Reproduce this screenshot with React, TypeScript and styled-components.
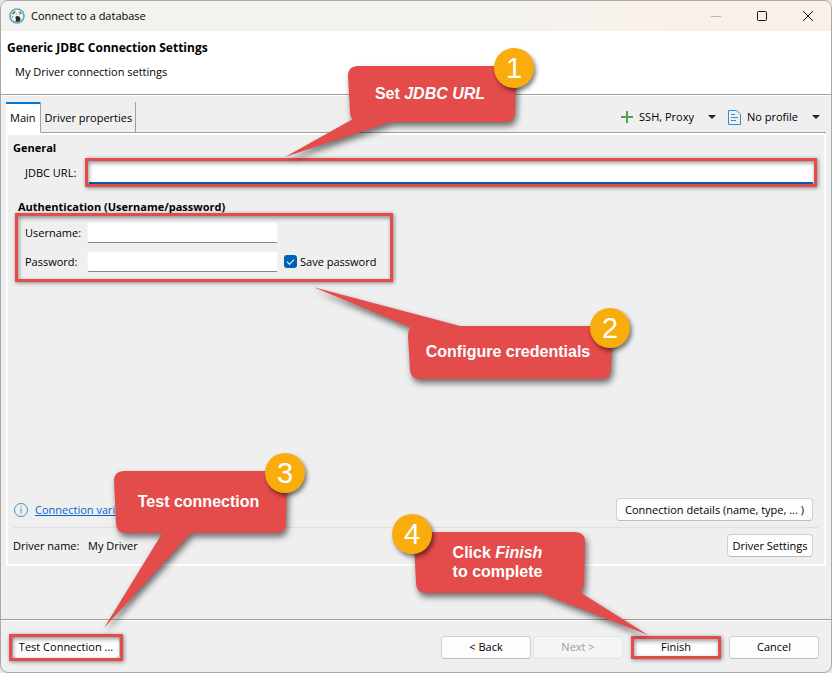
import React, { ReactNode } from "react";
import styled, { createGlobalStyle, css } from "styled-components";

const RED = "#e44b4b";
const LINE = "#a0a0a0";
const PANEL = "#efefef";

const GlobalStyle = createGlobalStyle`
  *, *::before, *::after { box-sizing: border-box; }
  body {
    margin: 0;
    background: #e4e4e6;
    color: #000;
    font: 11px/16px "Open Sans", "Noto Sans", sans-serif;
    white-space: nowrap;
  }
  button, input { font: inherit; color: inherit; }
`;

const Dialog = styled.main`
  position: relative;
  display: flex;
  flex-direction: column;
  min-height: 100vh;
  overflow: hidden;
  background: ${PANEL};
  border: 1px solid #a9a9ab;
  border-radius: 8px;
`;

const TitleBar = styled.header`
  display: flex;
  align-items: center;
  height: 30px;
  padding-left: 8px;
  gap: 6px;
  background: linear-gradient(90deg, #f3f2ef 60%, #f9f1e9 80%);
`;

const WindowButtons = styled.div`
  display: flex;
  margin-left: auto;
`;

const WindowButton = styled.button`
  display: grid;
  place-items: center;
  width: 46px;
  height: 30px;
  padding: 0;
  border: 0;
  background: none;
  color: #111;
  &:disabled { color: #bdb9b3; }
`;

const Intro = styled.section`
  display: flex;
  flex-direction: column;
  gap: 8px;
  height: 64px;
  padding: 9px 6px;
  background: #fff;
  border-bottom: 1px solid ${LINE};
`;

const IntroTitle = styled.h1`
  margin: 0;
  font-size: 12px;
  line-height: 16px;
  font-weight: 700;
`;

const IntroText = styled.p`
  margin: 0;
  padding-left: 8px;
`;

const Body = styled.div`
  display: flex;
  flex: 1;
  flex-direction: column;
  padding: 6px 5px 53px;
  border-top: 1px solid #fff;
`;

const TabBar = styled.div`
  display: flex;
  height: 31px;
`;

const Tab = styled.button<{ $active?: boolean }>`
  padding: 2px 3px 0 4px;
  border: 0;
  border-right: 1px solid ${LINE};
  border-bottom: 1px solid ${LINE};
  background: none;
  ${(p) =>
    p.$active &&
    css`
      padding: 2px 4px 0;
      border-bottom-color: #fff;
      background: linear-gradient(#0078d7 2px, #fff 2px);
    `}
`;

const Tools = styled.div`
  display: flex;
  flex: 1;
  align-items: center;
  justify-content: flex-end;
  gap: 12px;
  padding-right: 6px;
  border-bottom: 1px solid ${LINE};
`;

const Tool = styled.button`
  display: flex;
  align-items: center;
  gap: 6px;
  padding: 0;
  border: 0;
  background: none;
`;

const Caret = styled.span`
  margin-left: 8px;
  border: 4px solid transparent;
  border-top-color: #222;
  border-bottom: 0;
`;

const Panel = styled.form`
  display: flex;
  flex: 1;
  flex-direction: column;
  padding: 7px 5px 6px;
  border: 2px solid #fff;
`;

const Heading = styled.h2<{ $indent?: boolean }>`
  margin: 0 0 ${(p) => (p.$indent ? 0 : 4)}px;
  padding-left: ${(p) => (p.$indent ? 5 : 0)}px;
  font-size: 11px;
  line-height: 12px;
  font-weight: 700;
`;

const Highlight = styled.div`
  position: relative;
  display: flex;
  &::after {
    content: "";
    position: absolute;
    inset: 0;
    border: 3px solid ${RED};
    box-shadow: 1px 1px 4px rgba(0, 0, 0, 0.45), inset 1px 2px 4px rgba(0, 0, 0, 0.4);
    pointer-events: none;
  }
`;

const UrlRow = styled.div`
  display: grid;
  grid-template-columns: 60px 1fr;
  align-items: center;
  margin: 0 2px 14px 12px;
`;

const TextBox = styled.input<{ $focus?: boolean }>`
  width: 100%;
  min-width: 0;
  height: ${(p) => (p.$focus ? 23 : 21)}px;
  padding: 0 4px;
  border: 1px solid #f5f5f5;
  border-bottom: ${(p) => (p.$focus ? "2px solid #005fb8" : "1px solid #868686")};
  border-radius: 2px;
  background: #fff;
  outline: none;
`;

const UrlHighlight = styled(Highlight)`
  padding: 3px;
`;

const Credentials = styled(Highlight)`
  display: grid;
  grid-template-columns: 62px 191px 1fr;
  align-items: center;
  gap: 8px 0;
  max-width: 378px;
  margin-left: 2px;
  padding: 9px 10px 10px;
`;

const SaveLabel = styled.label`
  grid-column: 3;
  display: flex;
  align-items: center;
  gap: 3px;
  padding-left: 6px;
`;

const CheckBox = styled.input`
  appearance: none;
  width: 13px;
  height: 13px;
  margin: 0;
  border-radius: 3px;
  background: #005fb8;
  display: grid;
  place-items: center;
  &:checked::before {
    content: "";
    width: 7px;
    height: 4px;
    border: solid #fff;
    border-width: 0 0 1px 1px;
    transform: translateY(-1px) rotate(-45deg);
  }
`;

const Details = styled.div`
  display: flex;
  align-items: center;
  justify-content: space-between;
  margin-top: auto;
  padding: 0 6px 6px 0;
`;

const DriverRow = styled.div`
  display: flex;
  align-items: center;
  justify-content: space-between;
  padding: 6px 6px 1px 0;
  border-top: 1px solid #dfdfdf;
`;

const InfoLine = styled.div`
  display: flex;
  align-items: center;
  gap: 6px;
`;

const Link = styled.a`
  color: #0066cc;
  text-decoration: underline;
`;

const Driver = styled.dl`
  display: grid;
  grid-template-columns: 75px auto;
  margin: 0;
  dd { margin: 0; }
`;

const Button = styled.button<{ $width?: number }>`
  min-width: ${(p) => p.$width ?? 90}px;
  height: 23px;
  padding: 0 4px;
  border: 1px solid #d0d0d0;
  border-bottom-color: #bcbcbc;
  border-radius: 4px;
  background: #fdfdfd;
  &:disabled {
    color: #9d9d9d;
    border-color: #e3e3e3;
    background: #f5f5f5;
  }
`;

const Footer = styled.footer`
  position: relative;
  display: flex;
  align-items: center;
  justify-content: space-between;
  height: 53px;
  padding: 2px 12px 0 8px;
  border-top: 1px solid ${LINE};
  box-shadow: inset 0 1px #fff;
`;

const TestHighlight = styled(Highlight)`
  padding: 2px 3px;
`;

const Actions = styled.div`
  display: flex;
  gap: 8px;
`;

const Pager = styled.div`
  display: flex;
  gap: 2px;
`;

const Bubble = styled.aside<{ $x: number; $y: number; $w: number; $h: number; $fromRight?: boolean; $fromBottom?: boolean }>`
  position: absolute;
  z-index: 2;
  ${(p) => (p.$fromRight ? "right" : "left")}: ${(p) => p.$x}px;
  ${(p) => (p.$fromBottom ? "bottom" : "top")}: ${(p) => p.$y}px;
  display: grid;
  place-items: center;
  width: ${(p) => p.$w}px;
  height: ${(p) => p.$h}px;
  padding: 0 4px 2px 0;
  color: #fff;
  font: 700 16px/19px "Liberation Sans", Arial, sans-serif;
  text-align: center;
  pointer-events: none;
`;

const BubbleShape = styled.svg`
  position: absolute;
  inset: 0;
  overflow: visible;
  filter: drop-shadow(2px 4px 3px rgba(0, 0, 0, 0.55));
`;

const BubbleText = styled.div`
  position: relative;
`;

const Badge = styled.span<{ $left?: boolean }>`
  position: absolute;
  top: -18px;
  ${(p) => (p.$left ? "left: -22px" : "right: -18px")};
  width: 40px;
  height: 40px;
  border-radius: 50%;
  background: #f9ad0c;
  box-shadow: 2px 3px 4px rgba(0, 0, 0, 0.5);
  font-weight: 400;
  font-size: 29px;
  line-height: 41px;
`;

interface CalloutProps {
  x: number;
  y: number;
  w: number;
  h: number;
  step: number;
  tail: string;
  fromRight?: boolean;
  fromBottom?: boolean;
  badgeLeft?: boolean;
  children: ReactNode;
}

function Callout({ x, y, w, h, step, tail, fromRight, fromBottom, badgeLeft, children }: CalloutProps) {
  const body = `M10 0H${w - 10}Q${w} 0 ${w} 10L${w - 1} ${h - 10}Q${w - 1} ${h} ${w - 11} ${h}H12Q2 ${h} 2 ${h - 10}L0 10Q0 0 10 0Z`;
  return (
    <Bubble $x={x} $y={y} $w={w} $h={h} $fromRight={fromRight} $fromBottom={fromBottom}>
      <BubbleShape width={w} height={h} fill={RED} aria-hidden="true">
        <path d={body} />
        <path d={tail} />
      </BubbleShape>
      <BubbleText>{children}</BubbleText>
      <Badge $left={badgeLeft}>{step}</Badge>
    </Bubble>
  );
}

const AppLogo = () => (
  <svg width="16" height="16" viewBox="0 0 16 16" aria-hidden="true">
    <circle cx="8" cy="8" r="7" fill="#f7f7f5" stroke="#4fb3bd" strokeWidth="1.7" />
    <path d="M3 5.8 5 3.6 7 3.2 5.6 5.1 4.2 6.6zM9.4 3.3l2.4 1 1 2.2-1.5-.7z" fill="#575250" />
    <path d="M6.2 9.1 8.3 7.8l2.5 1.3.9 2.2-1 2L8.3 14l-2-.8.7-2z" fill="#302b29" />
    <path d="M3.2 7.8 4 10M10 5.8l.8 1M7.1 5.4v1.2" stroke="#777" strokeWidth=".9" fill="none" />
  </svg>
);

const PlusIcon = () => (
  <svg width="12" height="12" viewBox="0 0 12 12" aria-hidden="true">
    <path d="M6 0v12M0 6h12" stroke="#4ba446" strokeWidth="2" />
  </svg>
);

const ProfileIcon = () => (
  <svg width="13" height="15" viewBox="0 0 13 15" fill="none" stroke="#2f8fd3" aria-hidden="true">
    <path d="M.5.5h8.3l3.7 3.7v10.3H.5zM3 4.5h4M3 7.5h7M3 10.5h5" />
  </svg>
);

const InfoIcon = () => (
  <svg width="16" height="16" viewBox="0 0 16 16" fill="none" stroke="#3b95d0" aria-hidden="true">
    <circle cx="8" cy="8" r="6.5" />
    <path d="M8 6.5v5M8 4v1.3" />
  </svg>
);

export default function App() {
  return (
    <>
      <GlobalStyle />
      <Dialog>
        <TitleBar>
          <AppLogo />
          <span>Connect to a database</span>
          <WindowButtons>
            <WindowButton disabled aria-label="Minimize">
              <svg width="10" height="10" stroke="currentColor"><path d="M0 5.5h10" /></svg>
            </WindowButton>
            <WindowButton aria-label="Maximize">
              <svg width="10" height="10" fill="none" stroke="currentColor"><rect x=".5" y=".5" width="9" height="9" rx="1" /></svg>
            </WindowButton>
            <WindowButton aria-label="Close">
              <svg width="10" height="10" stroke="currentColor"><path d="M0 0l10 10M10 0 0 10" /></svg>
            </WindowButton>
          </WindowButtons>
        </TitleBar>

        <Intro>
          <IntroTitle>Generic JDBC Connection Settings</IntroTitle>
          <IntroText>My Driver connection settings</IntroText>
        </Intro>

        <Body>
          <TabBar>
            <Tab $active>Main</Tab>
            <Tab>Driver properties</Tab>
            <Tools>
              <Tool><PlusIcon />SSH, Proxy<Caret /></Tool>
              <Tool><ProfileIcon />No profile<Caret /></Tool>
            </Tools>
          </TabBar>

          <Panel onSubmit={(e) => e.preventDefault()}>
            <Heading>General</Heading>
            <UrlRow>
              <label htmlFor="url">JDBC URL:</label>
              <UrlHighlight><TextBox id="url" $focus /></UrlHighlight>
            </UrlRow>

            <Heading $indent>Authentication (Username/password)</Heading>
            <Credentials>
              <label htmlFor="user">Username:</label>
              <TextBox id="user" />
              <span />
              <label htmlFor="password">Password:</label>
              <TextBox id="password" type="password" />
              <SaveLabel><CheckBox type="checkbox" defaultChecked />Save password</SaveLabel>
            </Credentials>

            <Details>
              <InfoLine>
                <InfoIcon />
                <Link href="#variables">Connection variables</Link>
              </InfoLine>
              <Button type="button" $width={197}>Connection details (name, type, ... )</Button>
            </Details>
            <DriverRow>
              <Driver><dt>Driver name:</dt><dd>My Driver</dd></Driver>
              <Button type="button" $width={86}>Driver Settings</Button>
            </DriverRow>
          </Panel>
        </Body>

        <Footer>
          <TestHighlight><Button $width={108}>Test Connection ...</Button></TestHighlight>
          <Actions>
            <Pager>
              <Button>&lt; Back</Button>
              <Button disabled>Next &gt;</Button>
            </Pager>
            <Highlight><Button>Finish</Button></Highlight>
            <Button>Cancel</Button>
          </Actions>
        </Footer>

        <Callout x={347} y={65} w={168} h={56} step={1} tail="M5 53L-63 91L46 55Z">
          Set <em>JDBC URL</em>
        </Callout>
        <Callout x={407} y={325} w={204} h={53} step={2} tail="M4 2L-95 -39L54 0.5L54 4Z">
          Configure credentials
        </Callout>
        <Callout x={113} y={139} w={173} h={62} step={3} fromBottom tail="M49 61L-10 157L78 61Z">
          Test connection
        </Callout>
        <Callout x={246} y={79} w={171} h={61} step={4} fromRight fromBottom badgeLeft tail="M124 60L234 103L164 59Z">
          Click <em>Finish</em><br />to complete
        </Callout>
      </Dialog>
    </>
  );
}
